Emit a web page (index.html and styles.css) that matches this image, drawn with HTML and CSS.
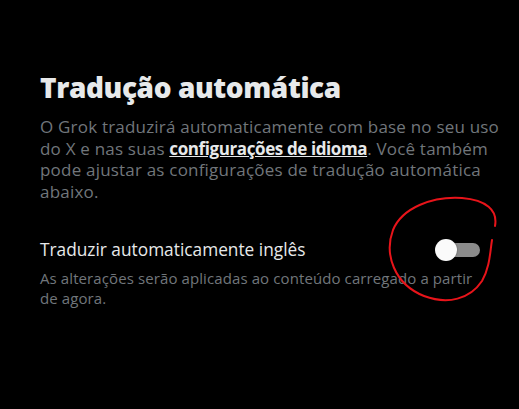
FILE: index.html
```html
<!DOCTYPE html>
<html lang="pt-BR">
<head>
  <meta charset="UTF-8" />
  <meta name="viewport" content="width=device-width, initial-scale=1.0" />
  <title>Tradução automática</title>
  <link rel="stylesheet" href="styles.css">
</head>
<body>

  <div class="settings">
    <h1 class="title">Tradução automática</h1>
    <p class="intro">
      O Grok traduzirá automaticamente com base no seu uso do X e nas suas
      <a href="#">configurações de idioma</a>. Você também pode ajustar as
      configurações de tradução automática abaixo.
    </p>

    <div class="option">
      <div class="option-row">
        <span class="option-label">Traduzir automaticamente inglês</span>
        <label class="switch">
          <input type="checkbox" />
          <span class="track"></span>
          <span class="knob"></span>
        </label>
      </div>
      <p class="option-hint">As alterações serão aplicadas ao conteúdo carregado a partir de agora.</p>
    </div>
  </div>

  <!-- marcação feita à mão por cima do print -->
  <svg class="scribble" viewBox="0 0 519 409" width="519" height="409">
    <path d="M495 226 C498 210 486 200 462 198 C432 196 402 208 393 230 C384 254 394 284 424 296 C448 305 470 299 482 281 C490 267 490 252 492 240"
          fill="none" stroke="#e8141a" stroke-width="2" stroke-linecap="round" />
  </svg>

</body>
</html>
```

FILE: styles.css
```css
* {
  box-sizing: border-box;
  margin: 0;
  font-family: 'Open Sans', 'Noto Sans', sans-serif;
}

body {
  background-color: #000;
  color: #e7e9ea;
  width: 519px;
  height: 409px;
  overflow: hidden;
  position: relative;
}

.settings {
  padding: 70px 9px 0 40px;
}

.title {
  font-size: 28px;
  font-weight: 800;
  line-height: 34px;
  letter-spacing: -0.4px;
  color: #e7e9ea;
  margin-bottom: 12px;
}

.intro {
  font-size: 17px;
  line-height: 21.7px;
  letter-spacing: 0.2px;
  color: #71767b;
}

.intro a {
  color: #e7e9ea;
  font-weight: 700;
  letter-spacing: -0.4px;
  text-decoration: underline;
}

.option {
  margin-top: 33px;
  padding-right: 30px;
}

.option-row {
  display: flex;
  align-items: center;
  justify-content: space-between;
  height: 28px;
}

.option-label {
  font-size: 17.3px;
  color: #e7e9ea;
}

.switch {
  position: relative;
  width: 44px;
  height: 24px;
  display: flex;
  align-items: center;
  justify-content: flex-end;
  cursor: pointer;
}

.switch input {
  display: none;
}

.track {
  width: 38px;
  height: 14px;
  border-radius: 7px;
  background-color: #8b8b8b;
}

.knob {
  position: absolute;
  left: -1px;
  top: 1px;
  width: 22px;
  height: 22px;
  border-radius: 50%;
  background-color: #fafafa;
  box-shadow: 0 0 2px rgba(0,0,0,0.4);
}

.option-hint {
  margin-top: 4px;
  font-size: 15px;
  line-height: 20.5px;
  letter-spacing: 0.1px;
  color: #71767b;
}

.scribble {
  position: absolute;
  top: 0;
  left: 0;
  pointer-events: none;
}
```
